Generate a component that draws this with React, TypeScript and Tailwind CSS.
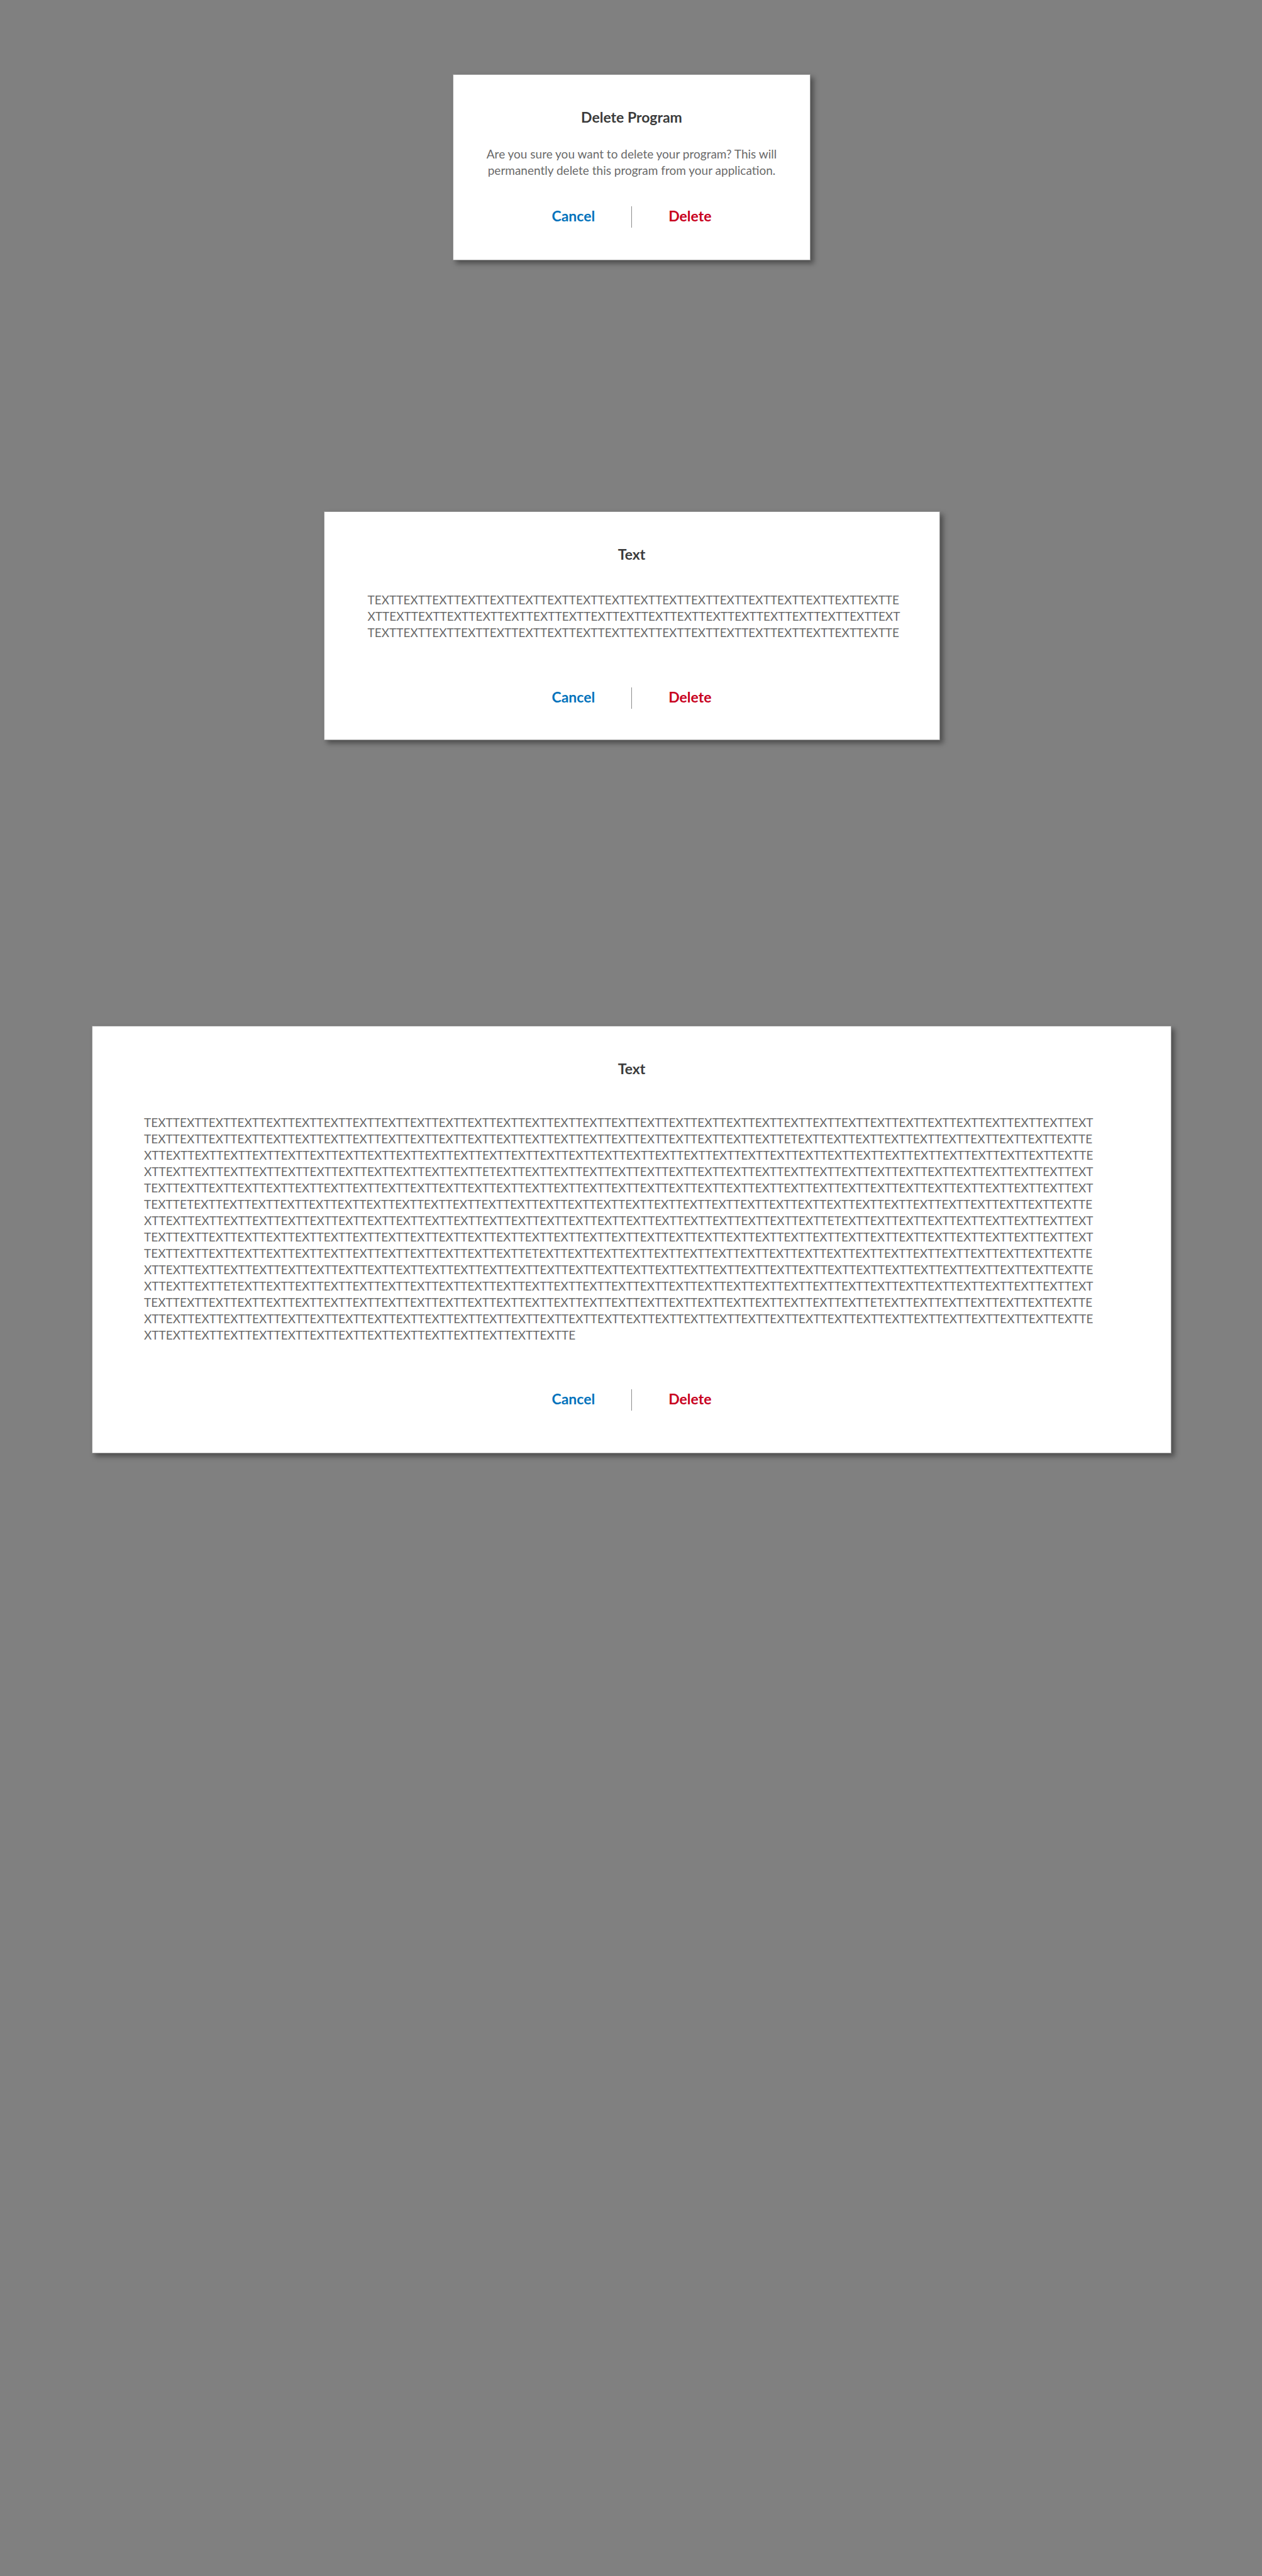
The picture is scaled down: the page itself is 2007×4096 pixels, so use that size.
import type { ReactNode } from 'react';

// 55 full words followed by a partial one
const PLACEHOLDER = 'TEXT'.repeat(55) + 'TE';

type DialogProps = {
  id: string;
  title: string;
  children: ReactNode;
  className: string;
  bodyClassName: string;
};

function ConfirmDialog({ id, title, children, className, bodyClassName }: DialogProps) {
  return (
    <section
      role="dialog"
      aria-labelledby={id}
      className={`w-full border border-[#969696] bg-white pt-[53px] shadow-[5px_5px_8px_rgba(0,0,0,0.4)] ${className}`}
    >
      <h2 id={id} className="text-center text-[23px] leading-7 font-bold text-[#3b3b3b]">
        {title}
      </h2>
      <p className={`text-[19px] leading-[26px] text-[#6a6a6a] ${bodyClassName}`}>{children}</p>
      <div className="flex items-start justify-center">
        <button type="button" className="mr-[58px] text-[23px] leading-[30px] font-bold text-[#0072bc]">
          Cancel
        </button>
        <span aria-hidden="true" className="h-[34px] w-px bg-[#8c8c8c]" />
        <button type="button" className="ml-[58px] text-[23px] leading-[30px] font-bold text-[#c8001e]">
          Delete
        </button>
      </div>
    </section>
  );
}

export default function App() {
  return (
    <main className="flex min-h-screen flex-col items-center bg-[#808080] pt-[118px] pr-8 pl-[34px] font-['Lato',sans-serif]">
      <ConfirmDialog
        id="delete-program"
        title="Delete Program"
        className="max-w-[569px] pb-[51px]"
        bodyClassName="mt-8 mb-11 px-11 text-center"
      >
        Are you sure you want to delete your program? This will permanently delete this program from
        your application.
      </ConfirmDialog>
      <ConfirmDialog
        id="medium-text"
        title="Text"
        className="mt-[399px] max-w-[980px] pb-[49px]"
        bodyClassName="mt-[46px] mb-[74px] pr-[57px] pl-[69px] break-all"
      >
        {PLACEHOLDER}
      </ConfirmDialog>
      <ConfirmDialog
        id="long-text"
        title="Text"
        className="mt-[454px] max-w-[1717px] pb-[67px]"
        bodyClassName="mt-[59px] mb-[73px] pr-[118px] pl-[82px] break-all"
      >
        {PLACEHOLDER.repeat(8)}
      </ConfirmDialog>
    </main>
  );
}
